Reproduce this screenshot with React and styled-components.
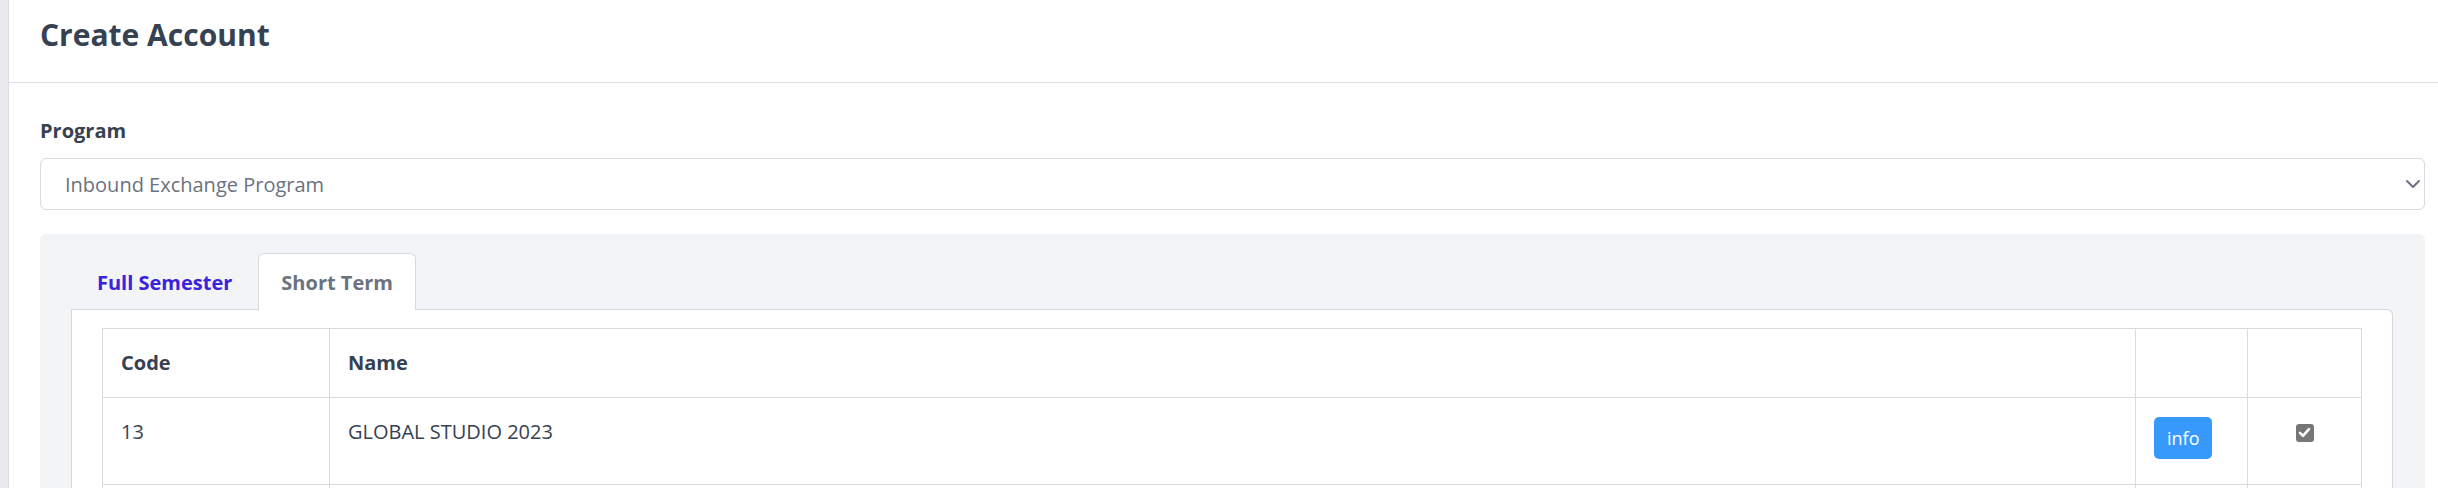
import React from 'react'
import styled, { createGlobalStyle } from 'styled-components'

const GlobalStyle = createGlobalStyle`
  body {
    margin: 0;
    background: #ffffff;
    font-family: "Open Sans", "Noto Sans", Arial, sans-serif;
    color: #374151;
  }
`

const Layout = styled.div`
  display: flex;
  min-height: 488px;
`
const SideStrip = styled.div`
  width: 8px;
  flex-shrink: 0;
  background: #e9eaec;
  border-right: 1px solid #dcdde0;
`
const Main = styled.main`
  flex: 1;
  min-width: 0;
`
const Header = styled.header`
  height: 83px;
  box-sizing: border-box;
  padding: 13px 0 0 31px;
  border-bottom: 1px solid #dddfe3;
`
const Title = styled.h1`
  margin: 0;
  font-size: 30px;
  line-height: 44px;
  font-weight: 700;
  color: #364152;
`
const Body = styled.div`
  padding: 33px 13px 0 31px;
`
const Label = styled.label`
  display: block;
  font-size: 20px;
  line-height: 30px;
  font-weight: 700;
  color: #364152;
  margin-bottom: 12px;
`
const SelectBox = styled.div`
  height: 52px;
  box-sizing: border-box;
  border: 1px solid #d8dadf;
  border-radius: 6px;
  display: flex;
  align-items: center;
  justify-content: space-between;
  padding: 0 3px 0 24px;
  font-size: 20px;
  color: #6b7280;
`
const Panel = styled.section`
  margin-top: 24px;
  background: #f3f4f6;
  border-radius: 6px 6px 0 0;
  padding: 19px 32px 0 31px;
`
const Tabs = styled.div`
  display: flex;
`
const Tab = styled.div`
  height: 57px;
  box-sizing: border-box;
  padding: 0 ${p => (p.active ? '22px' : '25px')};
  display: flex;
  align-items: center;
  font-size: 20px;
  font-weight: 700;
  color: ${p => (p.active ? '#6b7280' : '#3b22dc')};
  background: ${p => (p.active ? '#ffffff' : 'transparent')};
  border: 1px solid ${p => (p.active ? '#d5d8dd' : 'transparent')};
  border-bottom: none;
  border-radius: 6px 6px 0 0;
  position: relative;
  z-index: 1;
  margin-bottom: -1px;
`
const TabContent = styled.div`
  background: #ffffff;
  border: 1px solid #d5d8dd;
  border-bottom: none;
  border-radius: 0 6px 0 0;
  padding: 18px 30px 10px 30px;
`
const Table = styled.table`
  width: 100%;
  table-layout: fixed;
  border-collapse: collapse;
  font-size: 20px;
  color: #364152;
`
const Th = styled.th`
  text-align: left;
  font-weight: 700;
  line-height: 30px;
  padding: 19px 18px;
  border: 1px solid #d9dbe0;
`
const Td = styled.td`
  line-height: 30px;
  padding: 19px 18px 25px;
  border: 1px solid #d9dbe0;
  vertical-align: top;
  text-align: ${p => p.align || 'left'};
`
const InfoButton = styled.button`
  display: block;
  height: 42px;
  padding: 0 13px;
  border: none;
  border-radius: 5px;
  background: #3799fc;
  color: #ffffff;
  font-family: inherit;
  font-size: 18px;
`
const Check = styled.span`
  display: inline-flex;
  align-items: center;
  justify-content: center;
  width: 18px;
  height: 18px;
  margin-top: 5px;
  border-radius: 3px;
  background: #767676;
`

const Chevron = () => (
  <svg width="16" height="10" viewBox="0 0 16 10" fill="none">
    <path d="M2 2l6 6 6-6" stroke="#6b7280" strokeWidth="2" strokeLinecap="round" strokeLinejoin="round" />
  </svg>
)

const CheckMark = () => (
  <svg width="13" height="13" viewBox="0 0 13 13" fill="none">
    <path d="M2 6.8l3 3 6-6.6" stroke="#ffffff" strokeWidth="2.6" strokeLinecap="round" strokeLinejoin="round" />
  </svg>
)

const App = () => {
  return (
    <>
      <GlobalStyle />
      <Layout>
        <SideStrip />
        <Main>
          <Header>
            <Title>Create Account</Title>
          </Header>
          <Body>
            <Label>Program</Label>
            <SelectBox>
              <span>Inbound Exchange Program</span>
              <Chevron />
            </SelectBox>
            <Panel>
              <Tabs>
                <Tab>Full Semester</Tab>
                <Tab active>Short Term</Tab>
              </Tabs>
              <TabContent>
                <Table>
                  <colgroup>
                    <col style={{ width: 227 }} />
                    <col />
                    <col style={{ width: 112 }} />
                    <col style={{ width: 114 }} />
                  </colgroup>
                  <thead>
                    <tr>
                      <Th>Code</Th>
                      <Th>Name</Th>
                      <Th></Th>
                      <Th></Th>
                    </tr>
                  </thead>
                  <tbody>
                    <tr>
                      <Td>13</Td>
                      <Td>GLOBAL STUDIO 2023</Td>
                      <Td>
                        <InfoButton>info</InfoButton>
                      </Td>
                      <Td align="center">
                        <Check>
                          <CheckMark />
                        </Check>
                      </Td>
                    </tr>
                    <tr>
                      <Td>&nbsp;</Td>
                      <Td></Td>
                      <Td></Td>
                      <Td></Td>
                    </tr>
                  </tbody>
                </Table>
              </TabContent>
            </Panel>
          </Body>
        </Main>
      </Layout>
    </>
  )
}

export default App
